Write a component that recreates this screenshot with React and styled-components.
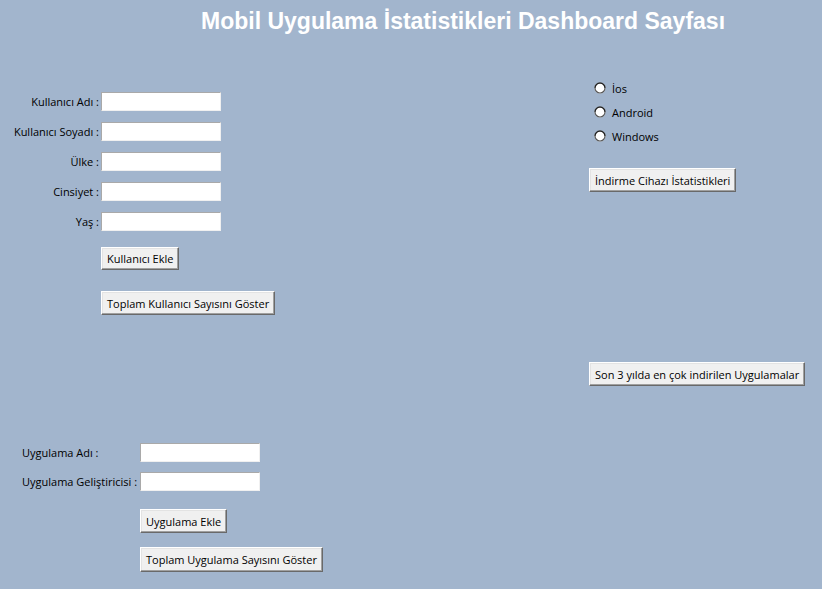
import React from "react";
import styled, { createGlobalStyle } from "styled-components";

const Global = createGlobalStyle`
  html, body { margin: 0; padding: 0; background: #a2b5cd; }
  * { box-sizing: border-box; }
`;

const Window = styled.div`
  width: 822px;
  height: 589px;
  background: #a2b5cd;
  font-family: "Open Sans", "Noto Sans", sans-serif;
  font-size: 11px;
  color: #000;
  overflow: hidden;
`;

const Title = styled.h1`
  margin: 0;
  height: 42px;
  line-height: 42px;
  padding-left: 201px;
  font-family: "Liberation Sans", Arial, sans-serif;
  font-weight: bold;
  font-size: 23px;
  color: #fff;
  white-space: nowrap;
`;

const Body = styled.div`
  display: flex;
`;

const LeftColumn = styled.div`
  width: 589px;
  display: flex;
  flex-direction: column;
  align-items: flex-start;
`;

const RightColumn = styled.div`
  flex: 1;
  display: flex;
  flex-direction: column;
  align-items: flex-start;
`;

const UserForm = styled.div`
  margin-top: 50px;
  display: grid;
  grid-template-columns: 101px 120px;
  grid-auto-rows: 19px;
  row-gap: 11px;
`;

const RightLabel = styled.label`
  text-align: right;
  padding-right: 2px;
  line-height: 19px;
  white-space: nowrap;
`;

const Entry = styled.input`
  width: 120px;
  height: 19px;
  background: #fff;
  border: 1px solid;
  border-color: #a9a9a9 #f0f0f0 #f0f0f0 #a9a9a9;
  padding: 0 2px;
  font: inherit;
  outline: none;
`;

const Button = styled.button`
  margin-left: ${(p) => p.$indent || 0}px;
  margin-top: ${(p) => p.$top || 0}px;
  height: ${(p) => p.$h || 24}px;
  padding: 0 5px;
  background: #f0f0f0;
  border: 1px solid;
  border-color: #fff #696969 #696969 #fff;
  box-shadow: inset -1px -1px 0 #a0a0a0, inset 1px 1px 0 #e3e3e3;
  font: inherit;
  color: #000;
  white-space: nowrap;
  cursor: default;
`;

const AppForm = styled.div`
  margin-top: 128px;
  margin-left: 22px;
  display: grid;
  grid-template-columns: 118px 120px;
  grid-auto-rows: 19px;
  row-gap: 10px;
`;

const LeftLabel = styled.label`
  line-height: 19px;
  white-space: nowrap;
`;

const RadioGroup = styled.div`
  margin-top: 34px;
  display: flex;
  flex-direction: column;
`;

const RadioRow = styled.label`
  height: 24px;
  display: flex;
  align-items: center;
  gap: 6px;
  padding-left: 5px;
`;

const RadioDot = () => (
  <svg width="12" height="12" viewBox="0 0 12 12">
    <circle cx="6" cy="6" r="5.5" fill="#fff" />
    <path d="M1 6 A5 5 0 0 1 11 6" fill="none" stroke="#222" strokeWidth="1.4" />
    <path d="M11 6 A5 5 0 0 1 1 6" fill="none" stroke="#555" strokeWidth="1.2" />
    <circle cx="6" cy="6" r="3.6" fill="#fff" />
  </svg>
);

export default function App() {
  const userFields = ["Kullanıcı Adı :", "Kullanıcı Soyadı :", "Ülke :", "Cinsiyet :", "Yaş :"];
  const appFields = ["Uygulama Adı :", "Uygulama Geliştiricisi :"];
  const platforms = ["İos", "Android", "Windows"];
  return (
    <Window>
      <Global />
      <Title>Mobil Uygulama İstatistikleri Dashboard Sayfası</Title>
      <Body>
        <LeftColumn>
          <UserForm>
            {userFields.map((f) => (
              <React.Fragment key={f}>
                <RightLabel>{f}</RightLabel>
                <Entry />
              </React.Fragment>
            ))}
          </UserForm>
          <Button $indent={101} $top={16} $h={23}>Kullanıcı Ekle</Button>
          <Button $indent={101} $top={21}>Toplam Kullanıcı Sayısını Göster</Button>
          <AppForm>
            {appFields.map((f) => (
              <React.Fragment key={f}>
                <LeftLabel>{f}</LeftLabel>
                <Entry />
              </React.Fragment>
            ))}
          </AppForm>
          <Button $indent={140} $top={18}>Uygulama Ekle</Button>
          <Button $indent={140} $top={14} $h={25}>Toplam Uygulama Sayısını Göster</Button>
        </LeftColumn>
        <RightColumn>
          <RadioGroup>
            {platforms.map((p) => (
              <RadioRow key={p}>
                <RadioDot />
                <span>{p}</span>
              </RadioRow>
            ))}
          </RadioGroup>
          <Button $top={20}>İndirme Cihazı İstatistikleri</Button>
          <Button $top={170}>Son 3 yılda en çok indirilen Uygulamalar</Button>
        </RightColumn>
      </Body>
    </Window>
  );
}
